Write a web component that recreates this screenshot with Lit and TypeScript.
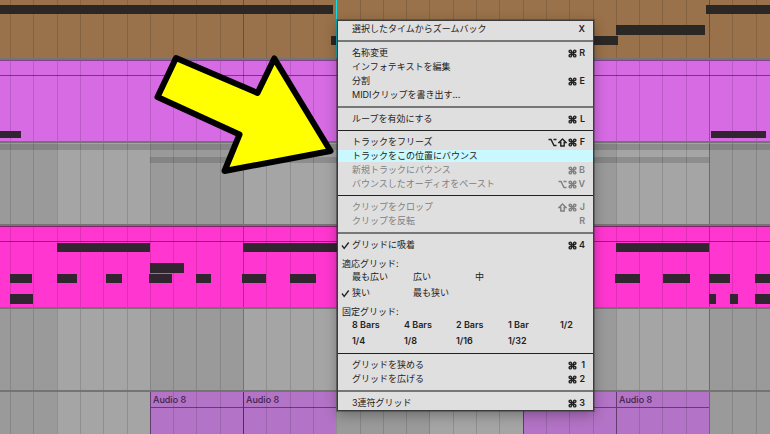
import { LitElement, html, css, svg, nothing } from "lit";
import { customElement, property } from "lit/decorators.js";
import { classMap } from "lit/directives/class-map.js";
import { styleMap } from "lit/directives/style-map.js";

/* ---------- timeline ---------- */

type Span = [start: number, end: number];
type NoteRow = { top: number; height: number; spans: Span[] };

const FIRST_BEAT = 10;
const BEAT = 23.3;
const beats = Array.from({ length: 160 }, (_, i) => Math.round(FIRST_BEAT + i * BEAT));
const bars = Array.from({ length: 40 }, (_, i) => Math.round(57 + i * BEAT * 4));
const OPEN_END = 4000;

const bassNotes: NoteRow[] = [
  { top: 5, height: 9, spans: [[0, 333], [706, OPEN_END]] },
  { top: 25, height: 10, spans: [[616, 705]] },
  { top: 36, height: 9, spans: [[331, 618]] },
];
const padNotes: NoteRow[] = [{ top: 70, height: 7, spans: [[0, 21], [711, 766]] }];
const drumNotes: NoteRow[] = [
  { top: 16, height: 9, spans: [[57, 150], [243, 337], [616, 709]] },
  { top: 36, height: 10, spans: [[150, 184]] },
  {
    top: 47,
    height: 9,
    spans: [[10, 32], [57, 77], [106, 122], [149, 172], [196, 211], [242, 266],
      [290, 316], [615, 640], [663, 690], [709, 730], [755, OPEN_END]],
  },
  { top: 67, height: 10, spans: [[10, 33], [709, 716], [730, 738], [755, OPEN_END]] },
];
const audioClips: Span[] = [[150, 243], [243, 336], [523, 616], [616, 709]];

const box = ([start, end]: Span) =>
  styleMap({ left: `${start}px`, width: `${end - start}px` });

@customElement("daw-arrangement")
class DawArrangement extends LitElement {
  static styles = css`
    :host {
      display: flex;
      flex-direction: column;
      position: relative;
      isolation: isolate;
      overflow: hidden;
      background: #9a9a9a;
    }
    .shade,
    .beat,
    .playhead {
      position: absolute;
      top: 0;
      bottom: 0;
    }
    .shade {
      background: #a5a5a5;
    }
    .beat {
      width: 1px;
      background: rgba(0, 0, 0, 0.13);
    }
    .beat.major {
      background: rgba(0, 0, 0, 0.3);
    }
    .playhead {
      left: 336px;
      width: 1px;
      background: #12dfe8;
      z-index: 2;
    }
    .lane {
      position: relative;
      flex: none;
      box-sizing: border-box;
      border-bottom: 2px solid #747474;
    }
    .bass {
      height: 60px;
      background: #99714a;
    }
    .pad {
      height: 83px;
      background: #d66be4;
      border-top: 1px solid #84418f;
    }
    .frozen {
      height: 83px;
    }
    .drums {
      height: 83px;
      background: #ff37d0;
      border-top: 1px solid #8a1e70;
    }
    .empty {
      height: 83px;
    }
    .audio {
      flex: 1;
      min-height: 42px;
      border-bottom: 0;
    }
    .title {
      height: 14px;
      border-bottom: 1px solid rgba(60, 0, 60, 0.55);
    }
    .note {
      position: absolute;
      background: #31252f;
      z-index: 1;
    }
    .bass .note {
      background: #2a2724;
    }
    .band {
      position: absolute;
      background: rgba(0, 0, 0, 0.14);
    }
    .band.wide {
      inset: 1px 0 auto 0;
      height: 6px;
    }
    .band.part {
      top: 14px;
      height: 6px;
    }
    .clip {
      position: absolute;
      top: 0;
      bottom: 0;
      box-sizing: border-box;
      background: #b373c6;
      border-left: 1px solid #70467c;
    }
    .clip .title {
      height: 15px;
      padding-left: 2px;
      font: 500 9px/16px Inter, "Liberation Sans", sans-serif;
      color: #3f2447;
    }
  `;

  private notes(rows: NoteRow[]) {
    return rows.map((row) =>
      row.spans.map(
        ([start, end]) => html`<div
          class="note"
          style=${styleMap({
            left: `${start}px`,
            width: `${end - start}px`,
            top: `${row.top}px`,
            height: `${row.height}px`,
          })}
        ></div>`,
      ),
    );
  }

  private grid() {
    return beats.map(
      (x) => html`<div
        class=${classMap({ beat: true, major: x === 243 || x === 709 })}
        style=${styleMap({ left: `${x}px` })}
      ></div>`,
    );
  }

  render() {
    return html`
      ${bars.map((x, i) =>
        i % 2 ? nothing : html`<div class="shade" style=${box([x, bars[i + 1]])}></div>`,
      )}
      <div class="lane bass">
        ${this.grid()}${this.notes(bassNotes)}
        <div class="playhead"></div>
      </div>
      <div class="lane pad">
        <div class="title"></div>
        ${this.grid()}${this.notes(padNotes)}
      </div>
      <div class="lane frozen">
        ${this.grid()}
        <div class="band wide"></div>
        <div class="band part" style=${box([150, 709])}></div>
      </div>
      <div class="lane drums">
        <div class="title"></div>
        ${this.grid()}${this.notes(drumNotes)}
      </div>
      <div class="lane empty">${this.grid()}</div>
      <div class="lane audio">
        ${audioClips.map(
          (c) => html`<div class="clip" style=${box(c)}>
            <div class="title">Audio 8</div>
          </div>`,
        )}
        ${this.grid()}
      </div>
    `;
  }
}

/* ---------- context menu ---------- */

type Item = {
  label: string;
  mods?: string[];
  key?: string;
  disabled?: boolean;
  active?: boolean;
};

const openers: { items: Item[]; soft: boolean }[] = [
  { soft: true, items: [{ label: "選択したタイムからズームバック", key: "X" }] },
  {
    soft: true,
    items: [
      { label: "名称変更", mods: ["⌘"], key: "R" },
      { label: "インフォテキストを編集" },
      { label: "分割", mods: ["⌘"], key: "E" },
      { label: "MIDIクリップを書き出す..." },
    ],
  },
  { soft: false, items: [{ label: "ループを有効にする", mods: ["⌘"], key: "L" }] },
  {
    soft: false,
    items: [
      { label: "トラックをフリーズ", mods: ["⌥", "⇧", "⌘"], key: "F" },
      { label: "トラックをこの位置にバウンス", active: true },
      { label: "新規トラックにバウンス", mods: ["⌘"], key: "B", disabled: true },
      { label: "バウンスしたオーディオをペースト", mods: ["⌥", "⌘"], key: "V", disabled: true },
    ],
  },
  {
    soft: true,
    items: [
      { label: "クリップをクロップ", mods: ["⇧", "⌘"], key: "J", disabled: true },
      { label: "クリップを反転", key: "R", disabled: true },
    ],
  },
];
const gridSteps: Item[] = [
  { label: "グリッドを狭める", mods: ["⌘"], key: "1" },
  { label: "グリッドを広げる", mods: ["⌘"], key: "2" },
];
const triplet: Item[] = [{ label: "3連符グリッド", mods: ["⌘"], key: "3" }];
const adaptive = ["最も広い", "広い", "中", "狭い", "最も狭い"];
const fixed = ["8 Bars", "4 Bars", "2 Bars", "1 Bar", "1/2", "1/4", "1/8", "1/16", "1/32"];

const glyphs: Record<string, unknown> = {
  "⌘": svg`<path d="M3.5 3.5h2v2h-2zM3.5 3.5H2.3a1.2 1.2 0 1 1 1.2-1.2zM5.5 3.5V2.3a1.2 1.2 0 1 1 1.2 1.2zM5.5 5.500h1.200a1.200 1.200 0 1 1-1.200 1.200zM3.500 5.500v1.200a1.200 1.200 0 1 1-1.200-1.200z"/>`,
  "⌥": svg`<path d="M.5 1.5H3l3 6h2.500M5.500 1.500h3"/>`,
  "⇧": svg`<path d="M4.500 1L8 4.500H6.200v3.500H2.800V4.500H1z"/>`,
};

@customElement("context-menu")
class ContextMenu extends LitElement {
  @property() choice = "狭い";

  static styles = css`
    :host {
      display: block;
      box-sizing: border-box;
      border: 1px solid #3c3c3c;
      background: #dfdfdf;
      color: #222;
      font: 400 9px/12px Inter, "Noto Sans CJK JP", sans-serif;
      box-shadow: 0 0 0 1px rgba(40, 40, 40, 0.35), 0 4px 12px rgba(0, 0, 0, 0.3);
    }
    .group {
      display: flex;
      flex-direction: column;
      gap: 2px;
      padding: 5px 0;
      border-bottom: 1px solid #222;
    }
    .group.soft {
      border-bottom: 2px solid #777;
    }
    .group:first-child {
      padding-top: 2px;
    }
    .group:last-child {
      border-bottom: 0;
      padding-bottom: 1px;
    }
    .item {
      display: flex;
      align-items: center;
      justify-content: space-between;
      box-sizing: border-box;
      width: 100%;
      height: 12px;
      margin: 0;
      padding: 0 8px 0 14px;
      border: 0;
      background: none;
      color: inherit;
      font: inherit;
      text-align: left;
      white-space: nowrap;
    }
    .item.active {
      background: #c9f8ff;
    }
    .item:disabled {
      color: #808080;
    }
    .keys {
      display: flex;
      align-items: center;
      gap: 1px;
      font-weight: 600;
    }
    .key {
      width: 7px;
      text-align: right;
    }
    .mod {
      width: 9px;
      height: 9px;
      fill: none;
      stroke: currentColor;
      stroke-width: 1.400;
    }
    .heading {
      height: 12px;
      margin-top: 5px;
      padding-left: 4px;
    }
    .choices {
      display: grid;
      row-gap: 4px;
      margin: -1px 0 0;
      padding: 0 0 0 14px;
    }
    .adaptive {
      grid-template-columns: 61px 62px 1fr;
    }
    .fixed {
      grid-template-columns: repeat(5, 52px);
      padding-bottom: 1px;
      font-weight: 600;
    }
    .choice {
      position: relative;
      height: 12px;
      white-space: nowrap;
    }
    .box {
      position: absolute;
      left: -12px;
      top: 1px;
      width: 10px;
      height: 10px;
      margin: 0;
      appearance: none;
    }
    .tick {
      position: absolute;
      left: -11px;
      top: 2px;
      width: 9px;
      height: 9px;
      fill: none;
      stroke: #222;
      stroke-width: 1.300;
      pointer-events: none;
    }
  `;

  private tick = html`<svg class="tick" viewBox="0 0 9 9" aria-hidden="true">
    <path d="M1 4.500L3.200 7.500L7.700 1.500" />
  </svg>`;

  private keys(mods: string[] = [], key?: string) {
    if (!key) return nothing;
    return html`<span class="keys">
      ${mods.map(
        (m) => html`<svg class="mod" viewBox="0 0 9 9" role="img" aria-label=${m}>${glyphs[m]}</svg>`,
      )}
      <span class="key">${key}</span>
    </span>`;
  }

  private group(items: Item[], soft: boolean) {
    return html`<div class=${classMap({ group: true, soft })}>
      ${items.map(
        (it) => html`<button
          class=${classMap({ item: true, active: !!it.active })}
          ?disabled=${it.disabled}
        >
          <span>${it.label}</span>${this.keys(it.mods, it.key)}
        </button>`,
      )}
    </div>`;
  }

  private choices(kind: string, labels: string[]) {
    return html`<div class="choices ${kind}">
      ${labels.map(
        (label) => html`<label class="choice">
          <input
            class="box"
            type="radio"
            name="grid"
            .checked=${label === this.choice}
            @change=${() => (this.choice = label)}
          />${label === this.choice ? this.tick : nothing}${label}
        </label>`,
      )}
    </div>`;
  }

  render() {
    return html`
      ${openers.map((g) => this.group(g.items, g.soft))}
      <div class="group">
        <label class="item">
          <span class="choice"><input class="box" type="checkbox" checked />${this.tick}グリッドに吸着</span>
          ${this.keys(["⌘"], "4")}
        </label>
        <div class="heading">適応グリッド:</div>
        ${this.choices("adaptive", adaptive)}
        <div class="heading">固定グリッド:</div>
        ${this.choices("fixed", fixed)}
      </div>
      ${this.group(gridSteps, true)} ${this.group(triplet, false)}
    `;
  }
}

/* ---------- page ---------- */

@customElement("app-root")
class AppRoot extends LitElement {
  static styles = css`
    :host {
      display: flex;
      position: relative;
      min-height: 100vh;
      overflow: hidden;
    }
    .arrangement {
      flex: 1;
    }
    .menu {
      position: absolute;
      left: 337px;
      top: 20px;
      width: 257px;
    }
    .pointer {
      position: absolute;
      left: 150px;
      top: 50px;
      width: 190px;
      height: 130px;
      fill: #ff0;
      stroke: #000;
      stroke-width: 6;
      stroke-linejoin: round;
    }
  `;

  render() {
    return html`
      <daw-arrangement class="arrangement"></daw-arrangement>
      <context-menu class="menu"></context-menu>
      <svg class="pointer" viewBox="150 50 190 130" aria-hidden="true">
        <path d="M176 58L257.500 93L274.300 58.500L330.500 151L224.500 171L239.500 134.500L157.500 97Z" />
      </svg>
    `;
  }
}
